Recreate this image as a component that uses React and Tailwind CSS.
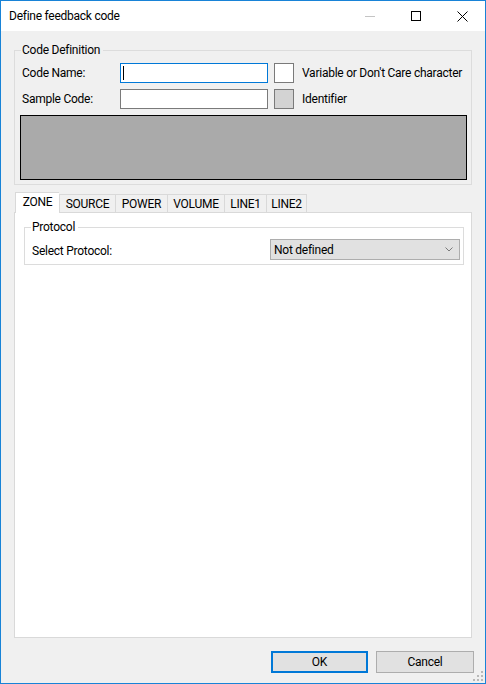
import { useState } from 'react';

const font = { fontFamily: 'Roboto, "Noto Sans", "Liberation Sans", sans-serif' };

const tabs = [
  { name: 'ZONE', w: 'w-[44px]' },
  { name: 'SOURCE', w: 'w-[56px]' },
  { name: 'POWER', w: 'w-[52px]' },
  { name: 'VOLUME', w: 'w-[57px]' },
  { name: 'LINE1', w: 'w-[42px]' },
  { name: 'LINE2', w: 'w-[41px]' },
];

const GroupBox = ({ title, className, children }) => (
  <fieldset className={`border border-[#dcdcdc] p-0 ${className}`}>
    <legend className="ml-[6px] pl-[1px] pr-[3px] leading-[16px]">{title}</legend>
    {children}
  </fieldset>
);

const TitleBar = () => (
  <div className="flex h-[30px] shrink-0 items-center bg-white">
    <div className="pl-[8px] text-[12px] text-black">Define feedback code</div>
    <div className="ml-auto flex h-full items-center">
      <div className="flex h-full w-[46px] items-center justify-center">
        <div className="h-px w-[10px] bg-[#c4c4c4]" />
      </div>
      <div className="flex h-full w-[46px] items-center justify-center">
        <div className="h-[10px] w-[10px] border border-black" />
      </div>
      <div className="flex h-full w-[46px] items-center justify-center">
        <svg width="11" height="11" viewBox="0 0 11 11">
          <path d="M0.5 0.5 L10.5 10.5 M10.5 0.5 L0.5 10.5" stroke="#000" strokeWidth="1" />
        </svg>
      </div>
    </div>
  </div>
);

const App = () => {
  const [active, setActive] = useState('ZONE');

  return (
    <div
      className="relative flex h-[684px] w-[486px] flex-col border border-[#1883d7] bg-[#f0f0f0] text-[12px] tracking-[-0.25px] text-black"
      style={font}
    >
      <TitleBar />

      <div className="flex flex-1 flex-col px-[13px] pt-[11px]">
        <GroupBox title="Code Definition" className="w-[458px]">
          <div className="flex flex-col gap-[6px] pb-[4px] pl-[5px] pr-[4px] pt-[5px]">
            <div className="flex h-[20px] items-center whitespace-nowrap">
              <span className="w-[100px] shrink-0 pl-[2px]">Code Name:</span>
              <div className="flex h-[20px] w-[148px] shrink-0 items-center border border-[#0078d7] bg-white pl-[2px]">
                <div className="h-[14px] w-px bg-black" />
              </div>
              <div className="ml-[6px] h-[20px] w-[20px] shrink-0 border border-[#7a7a7a] bg-white" />
              <span className="ml-[8px]">Variable or Don't Care character</span>
            </div>
            <div className="flex h-[20px] items-center whitespace-nowrap">
              <span className="w-[100px] shrink-0 pl-[2px]">Sample Code:</span>
              <div className="h-[20px] w-[148px] shrink-0 border border-[#7a7a7a] bg-white" />
              <div className="ml-[6px] h-[20px] w-[20px] shrink-0 border border-[#7a7a7a] bg-[#d3d3d3]" />
              <span className="ml-[8px]">Identifier</span>
            </div>
            <div className="h-[65px] w-[447px] border border-black bg-[#aaaaaa]" />
          </div>
        </GroupBox>

        <div className="mt-[7px] flex h-[20px] items-end pl-[1px]">
          {tabs.map((t, i) => {
            const on = t.name === active;
            const last = i === tabs.length - 1;
            return (
              <button
                key={t.name}
                onClick={() => setActive(t.name)}
                className={`${t.w} flex shrink-0 items-center justify-center border-l border-t border-[#d9d9d9] ${
                  last ? 'border-r' : ''
                } ${on ? 'relative z-10 -mb-px h-[21px] bg-white pb-[2px]' : 'h-[18px] bg-[#f0f0f0]'}`}
              >
                {t.name}
              </button>
            );
          })}
        </div>

        <div className="h-[426px] w-[458px] border border-[#d9d9d9] bg-white pl-[9px] pr-[7px] pt-[6px]">
          <GroupBox title="Protocol" className="w-[440px]">
            <div className="flex h-[29px] items-start pb-[4px] pl-[7px] pr-[3px] pt-[4px]">
              <span className="pt-[3px]">Select Protocol:</span>
              <div className="ml-auto flex h-[21px] w-[190px] items-center border border-[#adadad] bg-[#e1e1e1] pl-[3px] pr-[6px]">
                <span>Not defined</span>
                <svg className="ml-auto" width="8" height="5" viewBox="0 0 8 5">
                  <path d="M0.5 0.5 L4 4 L7.5 0.5" fill="none" stroke="#7a7a7a" strokeWidth="1" />
                </svg>
              </div>
            </div>
          </GroupBox>
        </div>

        <div className="mt-[13px] flex justify-end gap-[8px]">
          <button className="h-[22px] w-[97px] border-2 border-[#0078d7] bg-[#e1e1e1]">OK</button>
          <button className="mr-[-2px] h-[22px] w-[98px] border border-[#adadad] bg-[#e1e1e1]">Cancel</button>
        </div>
      </div>

      <svg className="absolute bottom-[1px] right-[1px]" width="12" height="12" viewBox="0 0 12 12">
        {[
          [8, 0],
          [4, 4],
          [8, 4],
          [0, 8],
          [4, 8],
          [8, 8],
        ].map(([x, y]) => (
          <rect key={`${x}-${y}`} x={x + 1} y={y + 1} width="2" height="2" fill="#b8b8b8" />
        ))}
      </svg>
    </div>
  );
};

export default App;
